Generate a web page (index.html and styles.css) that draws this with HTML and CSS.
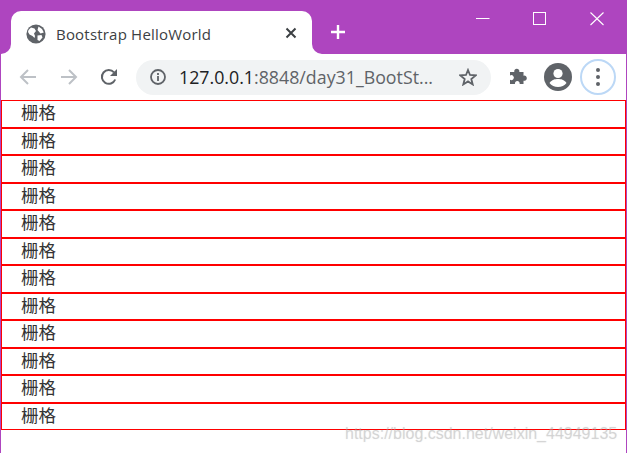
FILE: index.html
```html
<!DOCTYPE html>
<html lang="zh">
<head>
<meta charset="utf-8">
<title>Bootstrap HelloWorld</title>
<link rel="stylesheet" href="styles.css">
</head>
<body>
<div class="window">
  <header class="titlebar">
    <div class="tab">
      <svg class="flare flare-left" viewBox="0 0 10 10"><path d="M10 0V10H0A10 10 0 0 0 10 0Z" fill="#fff"/></svg>
      <svg class="globe" width="20" height="20" viewBox="0 0 20 20"><circle cx="10" cy="10" r="9.6" fill="#5f6368"/><path d="M2.5 6 5 3.6 8.5 4.5 10 7 8 9.5 9 12 8.5 14 6.5 12 3.5 10.5 2 8ZM12.5 2.5 16 5 17.8 8.5 14.5 9.5 11.5 6ZM11.5 11.5 15.5 11 16.5 13.5 13.5 17 11.5 16Z" fill="#fff"/></svg>
      <span class="tab-title">Bootstrap HelloWorld</span>
      <svg class="tab-close" width="12" height="12" viewBox="0 0 12 12"><path d="M1.5 1.5 10.5 10.5M10.5 1.5 1.5 10.5" stroke="#3c4043" stroke-width="2"/></svg>
      <svg class="flare flare-right" viewBox="0 0 10 10"><path d="M0 0V10H10A10 10 0 0 1 0 0Z" fill="#fff"/></svg>
    </div>
    <svg class="new-tab" width="14" height="14" viewBox="0 0 14 14"><path d="M7 0V14M0 7H14" stroke="#fff" stroke-width="2.4"/></svg>
    <div class="win-controls">
      <svg width="14" height="14" viewBox="0 0 14 14"><path d="M0 6.5H13.5" stroke="#fff" stroke-width="1"/></svg>
      <svg width="14" height="14" viewBox="0 0 14 14"><rect x=".5" y=".5" width="12" height="12" fill="none" stroke="#fff"/></svg>
      <svg width="14" height="14" viewBox="0 0 14 14"><path d="M.5 .5 13.5 13M13.5 .5 .5 13" stroke="#fff" stroke-width="1.1"/></svg>
    </div>
  </header>
  <nav class="toolbar">
    <svg class="nav-icon" width="18" height="18" viewBox="0 0 18 18"><path d="M17 9H2M9 2 2 9 9 16" fill="none" stroke="#bdc1c6" stroke-width="2"/></svg>
    <svg class="nav-icon" width="18" height="18" viewBox="0 0 18 18"><path d="M1 9H16M9 2 16 9 9 16" fill="none" stroke="#bdc1c6" stroke-width="2"/></svg>
    <svg class="nav-icon" width="18" height="18" viewBox="0 0 18 18"><path d="M15.2 11.5A6.9 6.9 0 1 1 14 4.4" fill="none" stroke="#5f6368" stroke-width="2"/><path d="M17 1V8H10Z" fill="#5f6368"/></svg>
    <div class="omnibox">
      <svg width="16" height="16" viewBox="0 0 16 16"><circle cx="8" cy="8" r="7" fill="none" stroke="#5f6368" stroke-width="1.8"/><path d="M8 7V12M8 4V6" stroke="#5f6368" stroke-width="1.8"/></svg>
      <span class="url"><span class="url-host">127.0.0.1</span>:8848/day31_BootSt...</span>
      <svg class="star" width="18" height="18" viewBox="0 0 18 18"><path d="M9 2 11 7 16.6 7.4 12.3 11 13.7 16.4 9 13.4 4.3 16.4 5.7 11 1.4 7.4 7 7Z" fill="none" stroke="#5f6368" stroke-width="1.8"/></svg>
    </div>
    <svg class="puzzle" width="20" height="20" viewBox="0 1.5 20 20"><path d="M2 6.5H6.3A2.6 2.6 0 1 1 11.3 6.5H15.5V10.2A2.6 2.6 0 1 1 15.5 15.2V18.5H11.6A2.4 2.4 0 1 0 7 18.5H2V14.2A2.5 2.5 0 1 0 2 10Z" fill="#5f6368"/></svg>
    <svg class="avatar" width="28" height="28" viewBox="0 0 28 28"><circle cx="14" cy="14" r="14" fill="#5f6368"/><circle cx="14" cy="10.5" r="4.6" fill="#fff"/><path d="M5.5 20C8 16.5 11 16 14 16S20 16.5 22.5 20C20.5 22.7 17.5 24 14 24S7.5 22.7 5.5 20Z" fill="#fff"/></svg>
    <div class="menu">
      <span class="dot"></span><span class="dot"></span><span class="dot"></span>
    </div>
  </nav>
  <main class="grid">
    <div class="cell">栅格</div>
    <div class="cell">栅格</div>
    <div class="cell">栅格</div>
    <div class="cell">栅格</div>
    <div class="cell">栅格</div>
    <div class="cell">栅格</div>
    <div class="cell">栅格</div>
    <div class="cell">栅格</div>
    <div class="cell">栅格</div>
    <div class="cell">栅格</div>
    <div class="cell">栅格</div>
    <div class="cell">栅格</div>
  </main>
</div>
<div class="watermark">https://blog.csdn.net/weixin_44949135</div>
</body>
</html>
```

FILE: styles.css
```css
html, body {
  margin: 0;
  padding: 0;
  height: 100%;
  overflow: hidden;
  background: #fff;
}
body {
  position: relative;
}
.window {
  box-sizing: border-box;
  width: 627px;
  height: 453px;
  border-left: 1px solid #ae45bf;
  border-right: 1px solid #ae45bf;
  display: flex;
  flex-direction: column;
  font-family: "Open Sans", "Noto Sans", sans-serif;
}
.titlebar {
  height: 54px;
  flex: none;
  background: #ae45bf;
  display: flex;
  align-items: flex-end;
  padding-left: 10px;
}
.tab {
  position: relative;
  box-sizing: border-box;
  width: 301px;
  height: 43px;
  background: #fff;
  border-radius: 10px 10px 0 0;
  display: flex;
  align-items: center;
  padding: 2px 15px 0 15px;
}
.flare {
  position: absolute;
  bottom: 0;
  width: 10px;
  height: 10px;
}
.flare-left { left: -10px; }
.flare-right { right: -10px; }
.globe { flex: none; }
.tab-title {
  margin-left: 10px;
  font-size: 15px;
  letter-spacing: .2px;
  color: #3c4043;
  white-space: nowrap;
}
.tab-close {
  flex: none;
  margin-left: auto;
  margin-bottom: 2px;
}
.new-tab {
  flex: none;
  margin: 0 0 15px 19px;
}
.win-controls {
  align-self: flex-start;
  margin: 12px 0 0 auto;
  padding-right: 22px;
  display: flex;
  gap: 43px;
}
.toolbar {
  height: 46px;
  flex: none;
  box-sizing: border-box;
  display: flex;
  align-items: center;
  padding-left: 18px;
  background: #fff;
}
.nav-icon { flex: none; margin-right: 23px; }
.nav-icon:nth-child(2) { margin-right: 22px; }
.nav-icon:nth-child(3) { margin-right: 18px; }
.omnibox {
  box-sizing: border-box;
  width: 355px;
  height: 35px;
  border-radius: 18px;
  background: #f1f3f4;
  display: flex;
  align-items: center;
  padding: 0 14px 0 14px;
  flex: none;
}
.url {
  margin-left: 13px;
  font-size: 17.8px;
  color: #5f6368;
  white-space: nowrap;
}
.url-host { color: #202124; }
.star { margin-left: auto; }
.puzzle { flex: none; margin-left: 17px; }
.avatar { flex: none; margin-left: 16px; }
.menu {
  box-sizing: border-box;
  flex: none;
  width: 36px;
  height: 36px;
  margin-left: 8px;
  border: 2px solid #bcd8f6;
  border-radius: 50%;
  display: flex;
  flex-direction: column;
  align-items: center;
  justify-content: center;
  gap: 3px;
}
.dot {
  width: 4px;
  height: 4px;
  border-radius: 50%;
  background: #5f6368;
}
.grid {
  display: grid;
  grid-auto-rows: 27.5px;
}
.cell {
  box-sizing: border-box;
  border: 1px solid #f00;
  padding: 0 0 0 19px;
  font-family: "Noto Sans CJK SC", sans-serif;
  font-size: 17.5px;
  line-height: 22px;
  color: #333;
}
.watermark {
  position: absolute;
  left: 345px;
  top: 424px;
  font-family: "Liberation Sans", sans-serif;
  font-size: 16px;
  line-height: 20px;
  color: rgba(170, 170, 170, .3);
  text-shadow: 0 0 1px rgba(170, 170, 170, .35);
  white-space: nowrap;
}
```
